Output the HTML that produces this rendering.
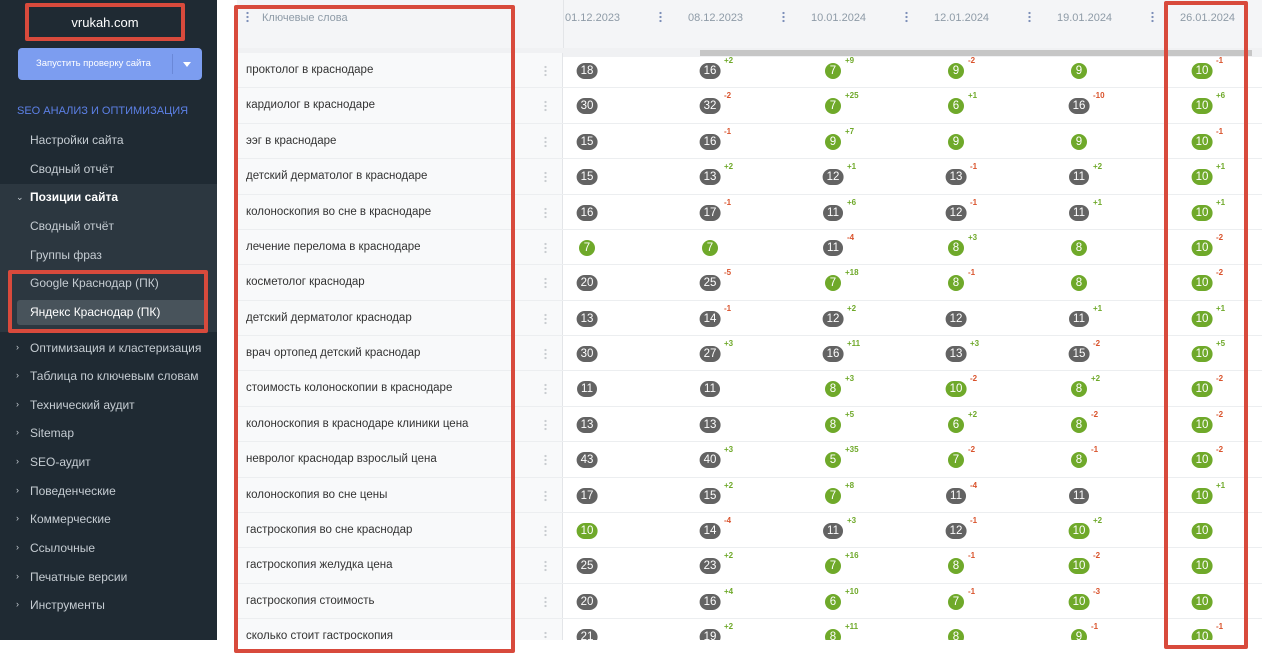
<!DOCTYPE html>
<html><head><meta charset="utf-8"><style>
*{margin:0;padding:0;box-sizing:border-box}
body{width:1280px;height:654px;overflow:hidden;background:#fff;font-family:"Liberation Sans","DejaVu Sans",sans-serif;position:relative}
#sb{position:absolute;left:0;top:0;width:217px;height:640px;background:#1f2a33;color:#c5ccd2;font-size:12px}
#sb .it{position:absolute;left:30px;white-space:nowrap}
#sb .ar{position:absolute;left:16px;font-size:9px;color:#c5ccd2}
.rb{position:absolute;border:4px solid #d84a3c;border-radius:2px}
#hdr{position:absolute;left:237px;top:0;width:1025px;height:48px;background:#f4f5f7}
.dt{position:absolute;top:12px;font-size:11px;color:#8e9ba7}
.kb{position:absolute;top:11px;width:3px;height:12px;background:radial-gradient(circle,#7d8fb8 1px,transparent 1.3px) 0 0/3px 4px}
#rows{position:absolute;left:237px;top:53px;width:1025px;overflow:hidden}
.r{height:35.375px;display:flex;border-bottom:1px solid #eceef0;position:relative;width:1064px}
.k{width:326px;flex-shrink:0;background:#f8f9fa;font-size:11.5px;color:#333;padding:11px 0 0 9px;position:relative;border-right:1px solid #e3e5e8}
.k i{position:absolute;left:307px;top:12px;width:3px;height:12px;background:radial-gradient(circle,#c8ccd0 1px,transparent 1.3px) 0 0/3px 4px}
.c{width:123px;flex-shrink:0;position:relative}
.b{position:absolute;left:24px;top:10px;transform:translateX(-50%);height:16px;min-width:16px;padding:0 4px;border-radius:8px;color:#fff;font-size:11.5px;line-height:16px;text-align:center;background:#636363}
.g{background:#6fa92a}
.d{position:absolute;top:3px;font-size:8px;font-weight:bold}
.p{color:#6fa92a}.m{color:#d9532c}
</style></head><body>
<div id="sb">
<div style="position:absolute;left:30px;top:8px;width:150px;height:30px;color:#fff;font-size:13px;text-align:center;line-height:30px">vrukah.com</div>
<div style="position:absolute;left:18px;top:48px;width:184px;height:32px;background:#7c9df0;border-radius:4px;color:#fff;font-size:9.5px;line-height:32px"><span style="position:absolute;left:18px">Запустить проверку сайта</span><span style="position:absolute;left:154px;top:6px;width:1px;height:20px;background:#6a88d8"></span><span style="position:absolute;left:165px;top:14px;border:4px solid transparent;border-top:5px solid #fff"></span></div>
<div style="position:absolute;left:17px;top:105px;color:#5c80e6;font-size:11px">SEO АНАЛИЗ И ОПТИМИЗАЦИЯ</div>
<div class="it" style="top:133px">Настройки сайта</div>
<div class="it" style="top:162px">Сводный отчёт</div>
<div style="position:absolute;left:0;top:184px;width:217px;height:148px;background:#2c3740"></div>
<div style="position:absolute;left:17px;top:300px;width:190px;height:25px;background:#48535b;border-radius:3px"></div>
<div class="ar" style="top:192px">⌄</div>
<div class="it" style="top:190px;color:#fff;font-weight:bold">Позиции сайта</div>
<div class="it" style="top:219px">Сводный отчёт</div>
<div class="it" style="top:248px">Группы фраз</div>
<div class="it" style="top:276px">Google Краснодар (ПК)</div>
<div class="it" style="top:305px;color:#fff">Яндекс Краснодар (ПК)</div>
<div class="ar" style="top:342px">›</div><div class="it" style="top:341px">Оптимизация и кластеризация</div>
<div class="ar" style="top:370px">›</div><div class="it" style="top:369px">Таблица по ключевым словам</div>
<div class="ar" style="top:399px">›</div><div class="it" style="top:398px">Технический аудит</div>
<div class="ar" style="top:427px">›</div><div class="it" style="top:426px">Sitemap</div>
<div class="ar" style="top:456px">›</div><div class="it" style="top:455px">SEO-аудит</div>
<div class="ar" style="top:485px">›</div><div class="it" style="top:484px">Поведенческие</div>
<div class="ar" style="top:513px">›</div><div class="it" style="top:512px">Коммерческие</div>
<div class="ar" style="top:542px">›</div><div class="it" style="top:541px">Ссылочные</div>
<div class="ar" style="top:571px">›</div><div class="it" style="top:570px">Печатные версии</div>
<div class="ar" style="top:599px">›</div><div class="it" style="top:598px">Инструменты</div>
</div>

<div id="hdr">
<div class="kb" style="left:9px"></div>
<div class="dt" style="left:25px">Ключевые слова</div>
<div style="position:absolute;left:326px;top:0;width:1px;height:48px;background:#e3e5e8"></div>
<div class="dt" style="left:328px">01.12.2023</div><div class="kb" style="left:422px"></div>
<div class="dt" style="left:451px">08.12.2023</div><div class="kb" style="left:545px"></div>
<div class="dt" style="left:574px">10.01.2024</div><div class="kb" style="left:668px"></div>
<div class="dt" style="left:697px">12.01.2024</div><div class="kb" style="left:791px"></div>
<div class="dt" style="left:820px">19.01.2024</div><div class="kb" style="left:914px"></div>
<div class="dt" style="left:943px">26.01.2024</div>
</div>
<div style="position:absolute;left:237px;top:48px;width:1025px;height:9px;background:#f0f1f3"></div>
<div style="position:absolute;left:700px;top:50px;width:552px;height:6px;background:#c6c6c6"></div>

<div id="rows">
<div class="r"><div class="k">проктолог в краснодаре<i></i></div><div class="c"><span class="b">18</span></div><div class="c"><span class="b">16</span><span class="d p" style="left:38px">+2</span></div><div class="c"><span class="b g">7</span><span class="d p" style="left:36px">+9</span></div><div class="c"><span class="b g">9</span><span class="d m" style="left:36px">-2</span></div><div class="c"><span class="b g">9</span></div><div class="c"><span class="b g">10</span><span class="d m" style="left:38px">-1</span></div></div>
<div class="r"><div class="k">кардиолог в краснодаре<i></i></div><div class="c"><span class="b">30</span></div><div class="c"><span class="b">32</span><span class="d m" style="left:38px">-2</span></div><div class="c"><span class="b g">7</span><span class="d p" style="left:36px">+25</span></div><div class="c"><span class="b g">6</span><span class="d p" style="left:36px">+1</span></div><div class="c"><span class="b">16</span><span class="d m" style="left:38px">-10</span></div><div class="c"><span class="b g">10</span><span class="d p" style="left:38px">+6</span></div></div>
<div class="r"><div class="k">ээг в краснодаре<i></i></div><div class="c"><span class="b">15</span></div><div class="c"><span class="b">16</span><span class="d m" style="left:38px">-1</span></div><div class="c"><span class="b g">9</span><span class="d p" style="left:36px">+7</span></div><div class="c"><span class="b g">9</span></div><div class="c"><span class="b g">9</span></div><div class="c"><span class="b g">10</span><span class="d m" style="left:38px">-1</span></div></div>
<div class="r"><div class="k">детский дерматолог в краснодаре<i></i></div><div class="c"><span class="b">15</span></div><div class="c"><span class="b">13</span><span class="d p" style="left:38px">+2</span></div><div class="c"><span class="b">12</span><span class="d p" style="left:38px">+1</span></div><div class="c"><span class="b">13</span><span class="d m" style="left:38px">-1</span></div><div class="c"><span class="b">11</span><span class="d p" style="left:38px">+2</span></div><div class="c"><span class="b g">10</span><span class="d p" style="left:38px">+1</span></div></div>
<div class="r"><div class="k">колоноскопия во сне в краснодаре<i></i></div><div class="c"><span class="b">16</span></div><div class="c"><span class="b">17</span><span class="d m" style="left:38px">-1</span></div><div class="c"><span class="b">11</span><span class="d p" style="left:38px">+6</span></div><div class="c"><span class="b">12</span><span class="d m" style="left:38px">-1</span></div><div class="c"><span class="b">11</span><span class="d p" style="left:38px">+1</span></div><div class="c"><span class="b g">10</span><span class="d p" style="left:38px">+1</span></div></div>
<div class="r"><div class="k">лечение перелома в краснодаре<i></i></div><div class="c"><span class="b g">7</span></div><div class="c"><span class="b g">7</span></div><div class="c"><span class="b">11</span><span class="d m" style="left:38px">-4</span></div><div class="c"><span class="b g">8</span><span class="d p" style="left:36px">+3</span></div><div class="c"><span class="b g">8</span></div><div class="c"><span class="b g">10</span><span class="d m" style="left:38px">-2</span></div></div>
<div class="r"><div class="k">косметолог краснодар<i></i></div><div class="c"><span class="b">20</span></div><div class="c"><span class="b">25</span><span class="d m" style="left:38px">-5</span></div><div class="c"><span class="b g">7</span><span class="d p" style="left:36px">+18</span></div><div class="c"><span class="b g">8</span><span class="d m" style="left:36px">-1</span></div><div class="c"><span class="b g">8</span></div><div class="c"><span class="b g">10</span><span class="d m" style="left:38px">-2</span></div></div>
<div class="r"><div class="k">детский дерматолог краснодар<i></i></div><div class="c"><span class="b">13</span></div><div class="c"><span class="b">14</span><span class="d m" style="left:38px">-1</span></div><div class="c"><span class="b">12</span><span class="d p" style="left:38px">+2</span></div><div class="c"><span class="b">12</span></div><div class="c"><span class="b">11</span><span class="d p" style="left:38px">+1</span></div><div class="c"><span class="b g">10</span><span class="d p" style="left:38px">+1</span></div></div>
<div class="r"><div class="k">врач ортопед детский краснодар<i></i></div><div class="c"><span class="b">30</span></div><div class="c"><span class="b">27</span><span class="d p" style="left:38px">+3</span></div><div class="c"><span class="b">16</span><span class="d p" style="left:38px">+11</span></div><div class="c"><span class="b">13</span><span class="d p" style="left:38px">+3</span></div><div class="c"><span class="b">15</span><span class="d m" style="left:38px">-2</span></div><div class="c"><span class="b g">10</span><span class="d p" style="left:38px">+5</span></div></div>
<div class="r"><div class="k">стоимость колоноскопии в краснодаре<i></i></div><div class="c"><span class="b">11</span></div><div class="c"><span class="b">11</span></div><div class="c"><span class="b g">8</span><span class="d p" style="left:36px">+3</span></div><div class="c"><span class="b g">10</span><span class="d m" style="left:38px">-2</span></div><div class="c"><span class="b g">8</span><span class="d p" style="left:36px">+2</span></div><div class="c"><span class="b g">10</span><span class="d m" style="left:38px">-2</span></div></div>
<div class="r"><div class="k">колоноскопия в краснодаре клиники цена<i></i></div><div class="c"><span class="b">13</span></div><div class="c"><span class="b">13</span></div><div class="c"><span class="b g">8</span><span class="d p" style="left:36px">+5</span></div><div class="c"><span class="b g">6</span><span class="d p" style="left:36px">+2</span></div><div class="c"><span class="b g">8</span><span class="d m" style="left:36px">-2</span></div><div class="c"><span class="b g">10</span><span class="d m" style="left:38px">-2</span></div></div>
<div class="r"><div class="k">невролог краснодар взрослый цена<i></i></div><div class="c"><span class="b">43</span></div><div class="c"><span class="b">40</span><span class="d p" style="left:38px">+3</span></div><div class="c"><span class="b g">5</span><span class="d p" style="left:36px">+35</span></div><div class="c"><span class="b g">7</span><span class="d m" style="left:36px">-2</span></div><div class="c"><span class="b g">8</span><span class="d m" style="left:36px">-1</span></div><div class="c"><span class="b g">10</span><span class="d m" style="left:38px">-2</span></div></div>
<div class="r"><div class="k">колоноскопия во сне цены<i></i></div><div class="c"><span class="b">17</span></div><div class="c"><span class="b">15</span><span class="d p" style="left:38px">+2</span></div><div class="c"><span class="b g">7</span><span class="d p" style="left:36px">+8</span></div><div class="c"><span class="b">11</span><span class="d m" style="left:38px">-4</span></div><div class="c"><span class="b">11</span></div><div class="c"><span class="b g">10</span><span class="d p" style="left:38px">+1</span></div></div>
<div class="r"><div class="k">гастроскопия во сне краснодар<i></i></div><div class="c"><span class="b g">10</span></div><div class="c"><span class="b">14</span><span class="d m" style="left:38px">-4</span></div><div class="c"><span class="b">11</span><span class="d p" style="left:38px">+3</span></div><div class="c"><span class="b">12</span><span class="d m" style="left:38px">-1</span></div><div class="c"><span class="b g">10</span><span class="d p" style="left:38px">+2</span></div><div class="c"><span class="b g">10</span></div></div>
<div class="r"><div class="k">гастроскопия желудка цена<i></i></div><div class="c"><span class="b">25</span></div><div class="c"><span class="b">23</span><span class="d p" style="left:38px">+2</span></div><div class="c"><span class="b g">7</span><span class="d p" style="left:36px">+16</span></div><div class="c"><span class="b g">8</span><span class="d m" style="left:36px">-1</span></div><div class="c"><span class="b g">10</span><span class="d m" style="left:38px">-2</span></div><div class="c"><span class="b g">10</span></div></div>
<div class="r"><div class="k">гастроскопия стоимость<i></i></div><div class="c"><span class="b">20</span></div><div class="c"><span class="b">16</span><span class="d p" style="left:38px">+4</span></div><div class="c"><span class="b g">6</span><span class="d p" style="left:36px">+10</span></div><div class="c"><span class="b g">7</span><span class="d m" style="left:36px">-1</span></div><div class="c"><span class="b g">10</span><span class="d m" style="left:38px">-3</span></div><div class="c"><span class="b g">10</span></div></div>
<div class="r"><div class="k">сколько стоит гастроскопия<i></i></div><div class="c"><span class="b">21</span></div><div class="c"><span class="b">19</span><span class="d p" style="left:38px">+2</span></div><div class="c"><span class="b g">8</span><span class="d p" style="left:36px">+11</span></div><div class="c"><span class="b g">8</span></div><div class="c"><span class="b g">9</span><span class="d m" style="left:36px">-1</span></div><div class="c"><span class="b g">10</span><span class="d m" style="left:38px">-1</span></div></div>
</div>
<div style="position:absolute;left:217px;top:640px;width:1063px;height:14px;background:#fff"></div>

<div class="rb" style="left:25px;top:3px;width:160px;height:38px"></div>
<div class="rb" style="left:8px;top:270px;width:200px;height:63px"></div>
<div class="rb" style="left:234px;top:5px;width:281px;height:648px"></div>
<div class="rb" style="left:1164px;top:1px;width:84px;height:648px"></div>
</body></html>
